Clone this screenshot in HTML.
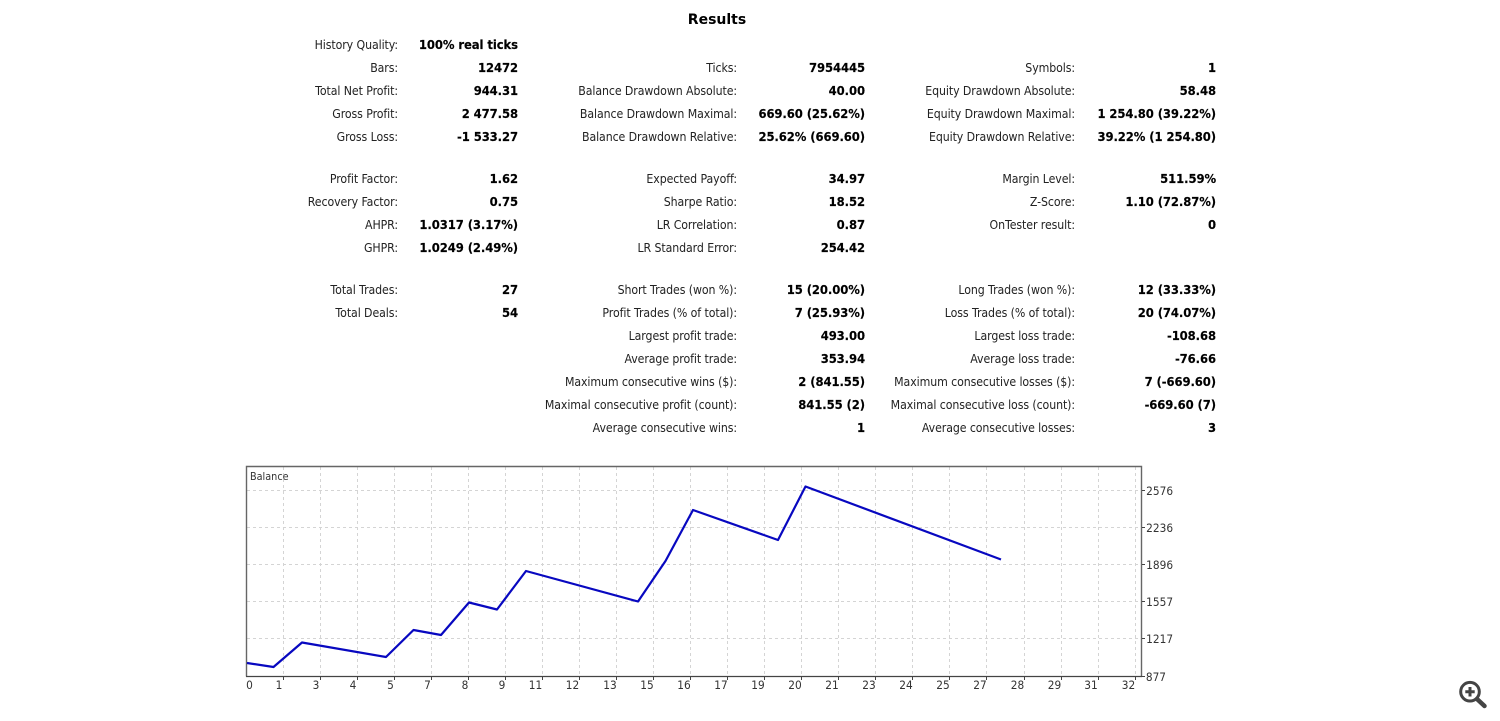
<!DOCTYPE html>
<html><head><meta charset="utf-8"><title>Results</title>
<style>
html,body{margin:0;padding:0;background:#fff;width:1500px;height:721px;overflow:hidden}
body{position:relative;font-family:"DejaVu Sans","Liberation Sans",sans-serif;color:#1a1a1a}
.r{position:absolute;left:0;width:1500px;height:16px;line-height:16px;white-space:nowrap;filter:blur(.25px)}
.r span{position:absolute;top:0;display:block;text-align:right;width:300px;font-size:12px;letter-spacing:-.1px;color:#222;transform-origin:right center;transform:scaleX(.917)}
.r b{position:absolute;display:block;text-align:right;width:200px;font-size:12.5px;letter-spacing:-.1px;font-weight:bold;color:#000;-webkit-text-stroke:.15px #000;transform-origin:right center;transform:scaleX(.93)}
.l1{left:98px}.v1{left:318px}.l2{left:437px}.v2{left:665px}.l3{left:775px}.v3{left:1016px}
h1{position:absolute;left:0;top:11px;width:1434px;margin:0;text-align:center;font-size:14px;line-height:18px;font-weight:bold;color:#000}
svg{position:absolute;left:0;top:0}
svg text{font-family:"DejaVu Sans","Liberation Sans",sans-serif;font-size:11.5px;fill:#333;transform-box:fill-box;transform-origin:center;transform:scaleX(.92)}
svg text.bal{font-size:11px;transform-origin:left center;transform:scaleX(.88)}
svg .line{filter:blur(.3px)}
</style></head><body>
<h1>Results</h1>
<div class="r" style="top:37px"><span class="l1">History Quality:</span><b class="v1">100% real ticks</b></div>
<div class="r" style="top:60px"><span class="l1">Bars:</span><b class="v1">12472</b><span class="l2">Ticks:</span><b class="v2">7954445</b><span class="l3">Symbols:</span><b class="v3">1</b></div>
<div class="r" style="top:83px"><span class="l1">Total Net Profit:</span><b class="v1">944.31</b><span class="l2">Balance Drawdown Absolute:</span><b class="v2">40.00</b><span class="l3">Equity Drawdown Absolute:</span><b class="v3">58.48</b></div>
<div class="r" style="top:106px"><span class="l1">Gross Profit:</span><b class="v1">2 477.58</b><span class="l2">Balance Drawdown Maximal:</span><b class="v2">669.60 (25.62%)</b><span class="l3">Equity Drawdown Maximal:</span><b class="v3">1 254.80 (39.22%)</b></div>
<div class="r" style="top:129px"><span class="l1">Gross Loss:</span><b class="v1">-1 533.27</b><span class="l2">Balance Drawdown Relative:</span><b class="v2">25.62% (669.60)</b><span class="l3">Equity Drawdown Relative:</span><b class="v3">39.22% (1 254.80)</b></div>
<div class="r" style="top:171px"><span class="l1">Profit Factor:</span><b class="v1">1.62</b><span class="l2">Expected Payoff:</span><b class="v2">34.97</b><span class="l3">Margin Level:</span><b class="v3">511.59%</b></div>
<div class="r" style="top:194px"><span class="l1">Recovery Factor:</span><b class="v1">0.75</b><span class="l2">Sharpe Ratio:</span><b class="v2">18.52</b><span class="l3">Z-Score:</span><b class="v3">1.10 (72.87%)</b></div>
<div class="r" style="top:217px"><span class="l1">AHPR:</span><b class="v1">1.0317 (3.17%)</b><span class="l2">LR Correlation:</span><b class="v2">0.87</b><span class="l3">OnTester result:</span><b class="v3">0</b></div>
<div class="r" style="top:240px"><span class="l1">GHPR:</span><b class="v1">1.0249 (2.49%)</b><span class="l2">LR Standard Error:</span><b class="v2">254.42</b></div>
<div class="r" style="top:282px"><span class="l1">Total Trades:</span><b class="v1">27</b><span class="l2">Short Trades (won %):</span><b class="v2">15 (20.00%)</b><span class="l3">Long Trades (won %):</span><b class="v3">12 (33.33%)</b></div>
<div class="r" style="top:305px"><span class="l1">Total Deals:</span><b class="v1">54</b><span class="l2">Profit Trades (% of total):</span><b class="v2">7 (25.93%)</b><span class="l3">Loss Trades (% of total):</span><b class="v3">20 (74.07%)</b></div>
<div class="r" style="top:328px"><span class="l2">Largest profit trade:</span><b class="v2">493.00</b><span class="l3">Largest loss trade:</span><b class="v3">-108.68</b></div>
<div class="r" style="top:351px"><span class="l2">Average profit trade:</span><b class="v2">353.94</b><span class="l3">Average loss trade:</span><b class="v3">-76.66</b></div>
<div class="r" style="top:374px"><span class="l2">Maximum consecutive wins ($):</span><b class="v2">2 (841.55)</b><span class="l3">Maximum consecutive losses ($):</span><b class="v3">7 (-669.60)</b></div>
<div class="r" style="top:397px"><span class="l2">Maximal consecutive profit (count):</span><b class="v2">841.55 (2)</b><span class="l3">Maximal consecutive loss (count):</span><b class="v3">-669.60 (7)</b></div>
<div class="r" style="top:420px"><span class="l2">Average consecutive wins:</span><b class="v2">1</b><span class="l3">Average consecutive losses:</span><b class="v3">3</b></div>

<svg width="1500" height="721" viewBox="0 0 1500 721">
<g stroke="#d4d4d4" stroke-width="1" stroke-dasharray="3 3" fill="none">
<path d="M247 490.5H1140M247 527.5H1140M247 564.5H1140M247 601.5H1140M247 638.5H1140"/>
<path d="M283.500 467V676M320.500 467V676M357.500 467V676M394.500 467V676M431.500 467V676M468.500 467V676M505.500 467V676M542.500 467V676M579.500 467V676M616.500 467V676M653.500 467V676M690.500 467V676M727.500 467V676M764.500 467V676M801.500 467V676M838.500 467V676M875.500 467V676M912.500 467V676M949.500 467V676M986.500 467V676M1024.500 467V676M1061.500 467V676M1098.500 467V676M1135.500 467V676"/>
</g>
<path d="M246.500 676.500V466.500H1141.500V676.500" fill="none" stroke="#666" stroke-width="1.400"/>
<path d="M246 676.500H1142" fill="none" stroke="#444" stroke-width="1.200"/>
<path d="M283.500 677V680M320.500 677V680M357.500 677V680M394.500 677V680M431.500 677V680M468.500 677V680M505.500 677V680M542.500 677V680M579.500 677V680M616.500 677V680M653.500 677V680M690.500 677V680M727.500 677V680M764.500 677V680M801.500 677V680M838.500 677V680M875.500 677V680M912.500 677V680M949.500 677V680M986.500 677V680M1024.500 677V680M1061.500 677V680M1098.500 677V680M1135.500 677V680M1142 490.500H1145M1142 527.500H1145M1142 564.500H1145M1142 601.500H1145M1142 638.500H1145M1142 676.500H1145" stroke="#444" stroke-width="1" fill="none"/>
<polyline class="line" points="247,663 273.500,667 302,642.500 386,657 413.500,630 441,635 469,602.500 497,609.500 526,571 638,601.500 665.500,561 693,510 778,540 805.500,486.500 1001,559.500" fill="none" stroke="#0808c0" stroke-width="2.200" stroke-linejoin="round"/>
<text class="bal" x="250" y="480">Balance</text>
<g text-anchor="middle">
<text x="249.500" y="689">0</text><text x="279" y="689">1</text><text x="316" y="689">3</text><text x="353" y="689">4</text><text x="390.500" y="689">5</text><text x="427.500" y="689">7</text><text x="465" y="689">8</text><text x="502" y="689">9</text><text x="535.500" y="689">11</text><text x="572.500" y="689">12</text><text x="610" y="689">13</text><text x="647" y="689">15</text><text x="684" y="689">16</text><text x="721" y="689">17</text><text x="758" y="689">19</text><text x="795" y="689">20</text><text x="832" y="689">21</text><text x="869" y="689">23</text><text x="906" y="689">24</text><text x="943" y="689">25</text><text x="980" y="689">27</text><text x="1017.500" y="689">28</text><text x="1054.500" y="689">29</text><text x="1091" y="689">31</text><text x="1128.500" y="689">32</text>
</g>
<text x="1145" y="495">2576</text><text x="1145" y="532">2236</text><text x="1145" y="569">1896</text><text x="1145" y="606">1557</text><text x="1145" y="643">1217</text><text x="1145" y="681">877</text>
<g fill="none" stroke="#444">
<circle cx="1470" cy="691.700" r="9.300" stroke-width="3"/>
<path d="M1477 699L1484.500 706" stroke-width="4.500" stroke-linecap="round"/>
<path d="M1470 687V696.500M1465.300 691.700H1474.700" stroke-width="3"/>
</g>
</svg>
</body></html>
